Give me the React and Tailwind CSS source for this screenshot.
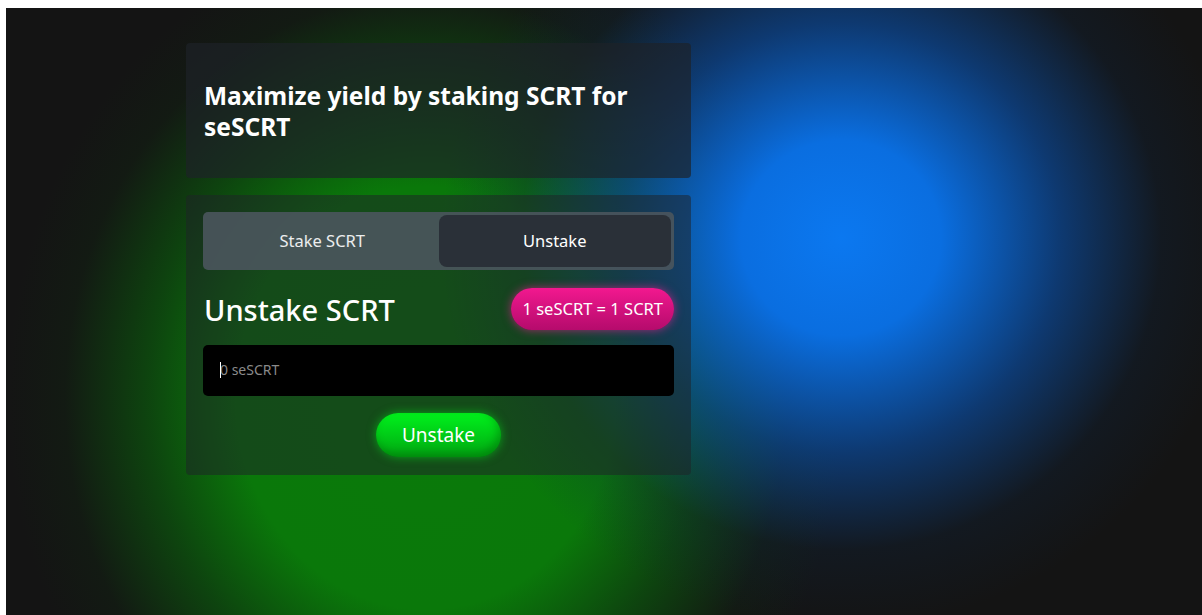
import React from "react";

export default function App() {
  return (
    <div className="bg-white pt-[8px] pl-[6px] font-['Noto_Sans',sans-serif]">
      <div className="relative h-[607px] w-[1196px] overflow-hidden bg-[#141414] bg-[radial-gradient(ellipse_400px_390px_at_835px_230px,#0b78f0_0%,#0a6ee0_25%,rgba(10,80,170,0.62)_55%,rgba(15,40,70,0.25)_80%,rgba(20,20,20,0)_100%),radial-gradient(ellipse_420px_470px_at_420px_390px,#0a7a0a_0%,#0a780a_45%,rgba(10,95,12,0.65)_66%,rgba(15,45,16,0.25)_86%,rgba(20,20,20,0)_100%)]">
        <div className="flex flex-col gap-[17px] pl-[180px] pt-[35px] w-[685px]">
          {/* Heading card */}
          <div className="h-[135px] rounded-[4px] bg-[#1e2228]/[0.68] px-[18px] flex items-center">
            <h1 className="text-[24.5px] font-bold leading-[31px] text-white">
              Maximize yield by staking SCRT for
              <br />
              seSCRT
            </h1>
          </div>

          {/* Stake / unstake card */}
          <div className="rounded-[4px] bg-[#1e2228]/[0.52] p-[17px] pb-[18px] flex flex-col">
            <div className="flex h-[58px] rounded-[5px] bg-[#4a555d]/90 p-[3px]">
              <button className="flex-1 text-[16.5px] text-white/90">Stake SCRT</button>
              <button className="flex-1 rounded-[8px] bg-[#2a3038] text-[16.5px] text-white">
                Unstake
              </button>
            </div>

            <div className="mt-[18px] flex h-[42px] items-center justify-between">
              <h2 className="pl-[1px] text-[29px] font-medium leading-none text-white">Unstake SCRT</h2>
              <span className="flex h-[42px] items-center rounded-full bg-gradient-to-b from-[#f2188f] to-[#b50b6c] px-[11px] text-[16.5px] text-white shadow-[0_0_10px_rgba(240,30,150,0.65)]">
                1 seSCRT = 1 SCRT
              </span>
            </div>

            <div className="relative mt-[15px]">
              <input
                placeholder="0 seSCRT"
                className="h-[51px] w-full rounded-[5px] bg-black px-[17px] pb-[2px] text-[14px] text-white outline-none placeholder:text-[#8a8a8a]"
              />
              <span className="absolute left-[17px] top-[17px] h-[16px] w-[1px] bg-white" />
            </div>

            <div className="mt-[17px] flex justify-center">
              <button className="h-[44px] w-[125px] rounded-full bg-gradient-to-b from-[#00f21c] to-[#00a812] text-[19px] text-white shadow-[0_0_10px_rgba(0,230,30,0.55),inset_-3px_-4px_8px_rgba(0,70,0,0.35)]">
                Unstake
              </button>
            </div>
          </div>
        </div>
      </div>
    </div>
  );
}
